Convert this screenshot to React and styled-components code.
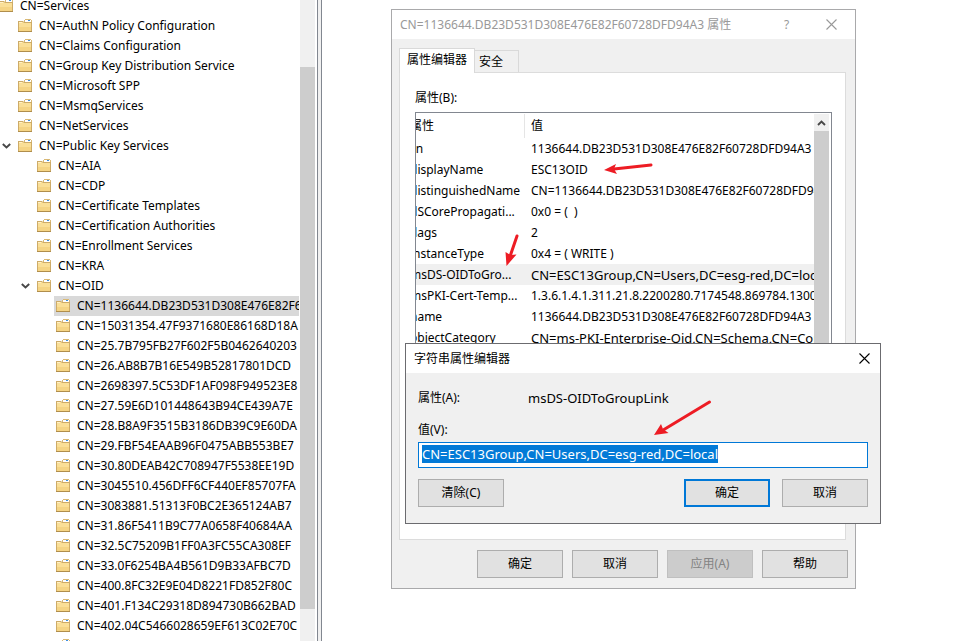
import { useEffect, useRef } from "react";
import styled, { createGlobalStyle, css } from "styled-components";

const treeItems = [
  { level: 0, name: "CN=Services" },
  { level: 1, name: "CN=AuthN Policy Configuration" },
  { level: 1, name: "CN=Claims Configuration" },
  { level: 1, name: "CN=Group Key Distribution Service" },
  { level: 1, name: "CN=Microsoft SPP" },
  { level: 1, name: "CN=MsmqServices" },
  { level: 1, name: "CN=NetServices" },
  { level: 1, name: "CN=Public Key Services", open: true },
  { level: 2, name: "CN=AIA" },
  { level: 2, name: "CN=CDP" },
  { level: 2, name: "CN=Certificate Templates" },
  { level: 2, name: "CN=Certification Authorities" },
  { level: 2, name: "CN=Enrollment Services" },
  { level: 2, name: "CN=KRA" },
  { level: 2, name: "CN=OID", open: true },
  { level: 3, name: "CN=1136644.DB23D531D308E476E82F60728DFD94A3", selected: true },
  { level: 3, name: "CN=15031354.47F9371680E86168D18A" },
  { level: 3, name: "CN=25.7B795FB27F602F5B0462640203" },
  { level: 3, name: "CN=26.AB8B7B16E549B52817801DCD" },
  { level: 3, name: "CN=2698397.5C53DF1AF098F949523E8" },
  { level: 3, name: "CN=27.59E6D101448643B94CE439A7E" },
  { level: 3, name: "CN=28.B8A9F3515B3186DB39C9E60DA" },
  { level: 3, name: "CN=29.FBF54EAAB96F0475ABB553BE7" },
  { level: 3, name: "CN=30.80DEAB42C708947F5538EE19D" },
  { level: 3, name: "CN=3045510.456DFF6CF440EF85707FA" },
  { level: 3, name: "CN=3083881.51313F0BC2E365124AB7" },
  { level: 3, name: "CN=31.86F5411B9C77A0658F40684AA" },
  { level: 3, name: "CN=32.5C75209B1FF0A3FC55CA308EF" },
  { level: 3, name: "CN=33.0F6254BA4B561D9B33AFBC7D" },
  { level: 3, name: "CN=400.8FC32E9E04D8221FD852F80C" },
  { level: 3, name: "CN=401.F134C29318D894730B662BAD" },
  { level: 3, name: "CN=402.04C5466028659EF613C02E70C" },
  { level: 3, name: "" },
];

const attributes = [
  { name: "cn", value: "1136644.DB23D531D308E476E82F60728DFD94A3" },
  { name: "displayName", value: "ESC13OID" },
  { name: "distinguishedName", value: "CN=1136644.DB23D531D308E476E82F60728DFD94A3" },
  { name: "dSCorePropagati...", value: "0x0 = (  )" },
  { name: "flags", value: "2" },
  { name: "instanceType", value: "0x4 = ( WRITE )" },
  { name: "msDS-OIDToGro...", value: "CN=ESC13Group,CN=Users,DC=esg-red,DC=local", large: true, selected: true },
  { name: "msPKI-Cert-Temp...", value: "1.3.6.1.4.1.311.21.8.2200280.7174548.869784.1300" },
  { name: "name", value: "1136644.DB23D531D308E476E82F60728DFD94A3" },
  { name: "objectCategory", value: "CN=ms-PKI-Enterprise-Oid,CN=Schema,CN=Configuration", large: true },
];

function FolderIcon() {
  return (
    <svg width="14" height="14" viewBox="0 0 14 14" aria-hidden="true">
      <path d="M6 1h1V0h6v1h1v3H6z" fill="#d9b976" />
      <path d="M7 1h6v2H7z" fill="#fff" />
      <path d="M10 1h2v1h-2z" fill="#3f8fe0" />
      <path d="M0 2h5l1 1h8v10H0z" fill="#cdab68" />
      <path d="M1 3h4l1 1h7v8H1z" fill="#fadf97" />
      <path d="M1 8h12v4H1z" fill="#f5d484" />
      <path d="M1 3h3v1H1z" fill="#fff0c4" />
      <path d="M0 12h14v1H0z" fill="#b08e4c" />
    </svg>
  );
}

function CloseIcon() {
  return (
    <svg width="11" height="11" viewBox="0 0 11 11" aria-hidden="true">
      <path d="M.5.5l10 10M10.500.5l-10 10" stroke="currentColor" strokeWidth="1.1" />
    </svg>
  );
}

function Chevron({ up }) {
  return (
    <svg width="9" height="6" viewBox="0 0 9 6" aria-hidden="true">
      <path d={up ? "M1 5l3.500-3.500L8 5" : "M.8 1l3.700 3.500L8.200 1"} fill="none" stroke="#484848" strokeWidth="1.900" />
    </svg>
  );
}

function Tree() {
  return (
    <TreePane>
      <TreeList>
        {treeItems.map((item, i) => (
          <TreeRow key={i} $level={item.level}>
            <Toggle>{item.open && <Chevron />}</Toggle>
            <TreeLabel $selected={item.selected}>
              <FolderIcon />
              {item.name}
            </TreeLabel>
          </TreeRow>
        ))}
      </TreeList>
      <TreeScroll>
        <Thumb $grow={542} />
        <Space $grow={32} />
      </TreeScroll>
    </TreePane>
  );
}

function PropertiesDialog() {
  return (
    <PropertiesWindow>
      <TitleBar $inactive>
        <Title>CN=1136644.DB23D531D308E476E82F60728DFD94A3 属性</Title>
        <TitleButton aria-label="Help">?</TitleButton>
        <TitleButton aria-label="Close"><CloseIcon /></TitleButton>
      </TitleBar>
      <PropertiesBody>
        <Tabs role="tablist">
          <Tab role="tab" aria-selected="true" $active>属性编辑器</Tab>
          <Tab role="tab" aria-selected="false">安全</Tab>
        </Tabs>
        <TabPanel role="tabpanel">
          <ListCaption id="attributes">属性(B):</ListCaption>
          <ListBox>
            <TableClip>
              <Table aria-labelledby="attributes">
                <thead>
                  <tr>
                    <HeadCell $name>属性</HeadCell>
                    <HeadCell>值</HeadCell>
                  </tr>
                </thead>
                <tbody>
                  {attributes.map(({ name, value, large, selected }) => (
                    <Row key={name} $selected={selected}>
                      <Cell>{name}</Cell>
                      <Cell $large={large}>{value}</Cell>
                    </Row>
                  ))}
                </tbody>
              </Table>
            </TableClip>
            <ListScroll>
              <ScrollButton aria-label="Scroll up"><Chevron up /></ScrollButton>
              <Thumb $grow={1} />
            </ListScroll>
          </ListBox>
        </TabPanel>
        <DialogButtons>
          <Button>确定</Button>
          <Button>取消</Button>
          <Button disabled>应用(A)</Button>
          <Button>帮助</Button>
        </DialogButtons>
      </PropertiesBody>
    </PropertiesWindow>
  );
}

function EditorDialog() {
  const input = useRef(null);

  useEffect(() => {
    input.current.focus();
    input.current.select();
  }, []);

  return (
    <EditorWindow>
      <TitleBar>
        <Title>字符串属性编辑器</Title>
        <TitleButton aria-label="Close"><CloseIcon /></TitleButton>
      </TitleBar>
      <EditorBody>
        <Field>
          <FieldName>属性(A):</FieldName>
          <FieldValue>msDS-OIDToGroupLink</FieldValue>
        </Field>
        <ValueLabel htmlFor="value">值(V):</ValueLabel>
        <ValueInput
          id="value"
          ref={input}
          spellCheck={false}
          defaultValue="CN=ESC13Group,CN=Users,DC=esg-red,DC=local"
        />
        <EditorButtons>
          <Button>清除(C)</Button>
          <Spacer />
          <Button $primary>确定</Button>
          <Button>取消</Button>
        </EditorButtons>
      </EditorBody>
    </EditorWindow>
  );
}

function Arrows() {
  return (
    <ArrowLayer width="400" height="440" viewBox="322 0 400 440" aria-hidden="true">
      <g stroke="#ed1c24" strokeWidth="3" strokeLinecap="round">
        <path d="M651 165 614 169" />
        <path d="M517 236 510.500 255" />
        <path d="M709.500 402 664 429.500" />
      </g>
      <g fill="#ed1c24">
        <path d="M604 170l12-6-2 5 3 5z" />
        <path d="M506.500 266l-1-14 5 3 6-.5z" />
        <path d="M654 435l7-11 2 5 5.500 4z" />
      </g>
    </ArrowLayer>
  );
}

export default function App() {
  return (
    <>
      <GlobalStyle />
      <Page>
        <Tree />
        <Splitter />
        <Workspace>
          <PropertiesDialog />
          <EditorDialog />
          <Arrows />
        </Workspace>
      </Page>
    </>
  );
}

const GlobalStyle = createGlobalStyle`
  * {
    box-sizing: border-box;
  }

  body {
    margin: 0;
    overflow: hidden;
    background: #fff;
  }

  body, button, input {
    font-family: "Noto Sans", "Noto Sans CJK SC", sans-serif;
    font-size: 12px;
    line-height: 16px;
    color: #000;
  }
`;

const Page = styled.div`
  display: flex;
  height: 100vh;
`;

const TreePane = styled.nav`
  flex: 0 0 317px;
  display: flex;
  overflow: hidden;
  padding-right: 2px;
`;

const TreeList = styled.ul`
  flex: 1;
  min-width: 0;
  margin: -4px 1px 0 0;
  padding: 0;
  list-style: none;
  overflow: hidden;
`;

const TreeRow = styled.li`
  display: flex;
  height: 20px;
  margin-left: -22px;
  padding-left: ${({ $level }) => $level * 19}px;
`;

const Toggle = styled.span`
  flex: 0 0 19px;
  display: flex;
  align-items: center;
  justify-content: center;
`;

const TreeLabel = styled.span`
  display: flex;
  align-items: center;
  gap: 7px;
  padding-left: 2px;
  white-space: nowrap;

  svg {
    flex: none;
  }

  ${({ $selected }) => $selected && css`
    flex: 1;
    min-width: 0;
    background: #d9d9d9;
  `}
`;

const TreeScroll = styled.div`
  flex: 0 0 15px;
  display: flex;
  flex-direction: column;
  padding-top: 67px;
  background: #f0f0f0;
`;

const Thumb = styled.div`
  flex: ${({ $grow }) => $grow};
  background: #cdcdcd;
`;

const Space = styled.div`
  flex: ${({ $grow }) => $grow};
`;

const Splitter = styled.div`
  flex: 0 0 5px;
  background: #f0f0f0;
  border: solid #828790;
  border-width: 0 1px;
`;

const Workspace = styled.main`
  flex: 1;
  position: relative;
`;

const Window = styled.section`
  position: absolute;
  display: flex;
  flex-direction: column;
  background: #f0f0f0;
`;

const PropertiesWindow = styled(Window)`
  left: 69px;
  top: 9px;
  width: 465px;
  height: 580px;
  border: 1px solid #a9a9ab;
`;

const EditorWindow = styled(Window)`
  left: 83px;
  top: 343px;
  width: 476px;
  border: 1px solid #6b6b6f;
`;

const TitleBar = styled.header`
  display: flex;
  align-items: center;
  height: 29px;
  padding-left: 8px;
  background: #fff;
  color: ${({ $inactive }) => ($inactive ? "#999" : "#000")};
`;

const Title = styled.h1`
  flex: 1;
  margin: 0;
  font-size: 12px;
  font-weight: 400;
  white-space: nowrap;
`;

const TitleButton = styled.button`
  display: flex;
  align-items: center;
  justify-content: center;
  width: 31px;
  height: 27px;
  padding: 0;
  border: 0;
  background: none;
  color: inherit;

  & + & {
    margin: 0 8px 0 14px;
  }
`;

const PropertiesBody = styled.div`
  flex: 1;
  display: flex;
  flex-direction: column;
  padding: 9px 7px 10px;
`;

const Tabs = styled.div`
  display: flex;
  align-items: flex-end;
`;

const Tab = styled.button`
  height: 22px;
  padding: 0 15px 0 4px;
  border: 1px solid #d9d9d9;
  border-width: 1px 1px 0 0;
  background: #f0f0f0;

  ${({ $active }) => $active && css`
    z-index: 1;
    height: 25px;
    margin-bottom: -1px;
    padding: 0 7px 2px;
    border-width: 1px 1px 0;
    background: #fff;
  `}
`;

const TabPanel = styled.div`
  flex: 1;
  display: flex;
  flex-direction: column;
  width: 447px;
  padding: 17px 13px 60px 15px;
  border: 1px solid #dcdcdc;
  background: #fff;
`;

const ListCaption = styled.div`
  margin-bottom: 6px;
`;

const ListBox = styled.div`
  flex: 1;
  display: flex;
  min-height: 0;
  padding: 1px 2px 1px 0;
  border: 1px solid #828790;
`;

const TableClip = styled.div`
  flex: 1;
  min-width: 0;
  overflow: hidden;
`;

const Table = styled.table`
  width: calc(100% + 12px);
  margin-left: -12px;
  table-layout: fixed;
  border-spacing: 0;
`;

const HeadCell = styled.th`
  width: ${({ $name }) => ($name ? "121px" : "auto")};
  height: 24px;
  padding: 0 6px;
  border-right: ${({ $name }) => ($name ? "1px solid #e5e5e5" : "0")};
  font-weight: 400;
  text-align: left;
`;

const Row = styled.tr`
  background: ${({ $selected }) => ($selected ? "#f0f0f0" : "#fff")};
`;

const Cell = styled.td`
  height: 21px;
  padding: 0 0 0 6px;
  overflow: hidden;
  font-size: ${({ $large }) => ($large ? 13 : 12)}px;
  white-space: pre;
`;

const ListScroll = styled.div`
  flex: 0 0 15px;
  display: flex;
  flex-direction: column;
`;

const ScrollButton = styled.button`
  display: flex;
  align-items: center;
  justify-content: center;
  height: 17px;
  padding: 0;
  border: 0;
  background: #f0f0f0;
`;

const Button = styled.button`
  width: 86px;
  height: 28px;
  padding: 0;
  border: ${({ $primary }) => ($primary ? "2px solid #0078d7" : "1px solid #adadad")};
  background: #e1e1e1;

  &:disabled {
    border-color: #bfbfbf;
    background: #ccc;
    color: #838383;
  }
`;

const DialogButtons = styled.div`
  display: flex;
  justify-content: flex-end;
  gap: 9px;
  margin-top: 10px;
`;

const EditorBody = styled.div`
  padding: 17px 12px 16px;
`;

const Field = styled.div`
  display: flex;
  margin-bottom: 16px;
`;

const FieldName = styled.span`
  width: 110px;
`;

const FieldValue = styled.span`
  font-size: 13px;
`;

const ValueLabel = styled.label`
  display: block;
  margin-bottom: 4px;
`;

const ValueInput = styled.input`
  display: block;
  width: 100%;
  height: 26px;
  padding: 0 3px 3px;
  border: 1px solid #0078d7;
  outline: 0;
  background: #fff;
  font-size: 13px;

  &::selection {
    background: rgba(0, 120, 215, 0.99);
    color: #fff;
  }
`;

const EditorButtons = styled.div`
  display: flex;
  gap: 12px;
  margin-top: 11px;
`;

const Spacer = styled.div`
  flex: 1;
`;

const ArrowLayer = styled.svg`
  position: absolute;
  left: 0;
  top: 0;
  pointer-events: none;
`;
